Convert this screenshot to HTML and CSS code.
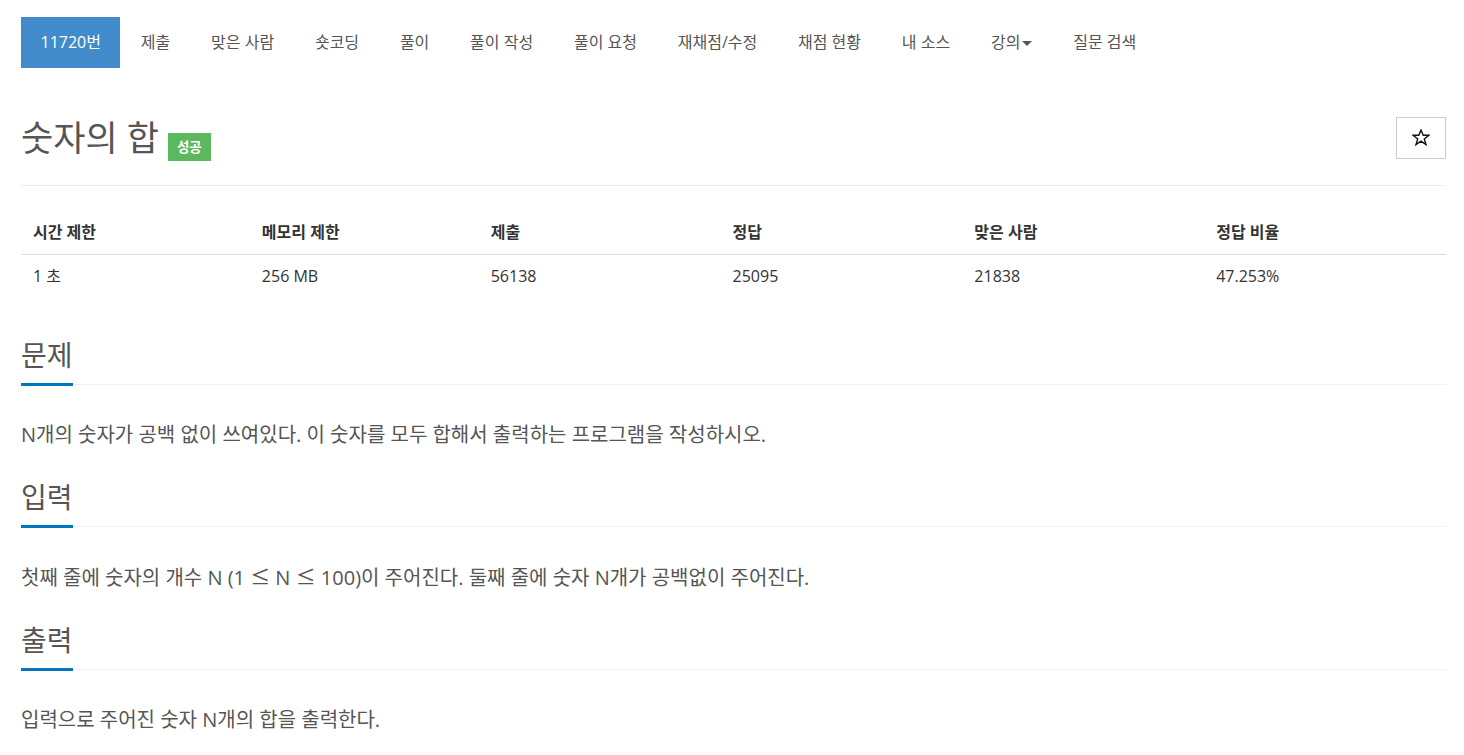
FILE: index.html
```html
<!DOCTYPE html>
<html lang="ko">
<head>
<meta charset="utf-8">
<title>11720번: 숫자의 합</title>
<link rel="stylesheet" href="styles.css">
</head>
<body>
<div class="container">
  <ul class="tabs">
    <li class="active"><a href="#">11720번</a></li>
    <li><a href="#">제출</a></li>
    <li><a href="#">맞은 사람</a></li>
    <li><a href="#">숏코딩</a></li>
    <li><a href="#">풀이</a></li>
    <li><a href="#">풀이 작성</a></li>
    <li><a href="#">풀이 요청</a></li>
    <li><a href="#">재채점/수정</a></li>
    <li><a href="#">채점 현황</a></li>
    <li><a href="#">내 소스</a></li>
    <li><a href="#">강의<span class="caret"></span></a></li>
    <li><a href="#">질문 검색</a></li>
  </ul>

  <div class="page-header">
    <h1 class="title"><span class="title-text">숫자의 합</span><span class="label-success">성공</span></h1>
    <button class="star-btn" type="button" aria-label="즐겨찾기">
      <svg width="18" height="17" viewBox="0 0 18 17"><polygon points="9,1 11.2,6.3 16.9,6.3 12.3,9.9 14,15.6 9,12.2 4,15.6 5.7,9.9 1.1,6.3 6.8,6.3" fill="none" stroke="#111" stroke-width="1.4" stroke-linejoin="miter"/></svg>
    </button>
  </div>

  <table class="info">
    <thead>
      <tr>
        <th class="c16">시간 제한</th>
        <th class="c16">메모리 제한</th>
        <th class="c17">제출</th>
        <th class="c17">정답</th>
        <th class="c17">맞은 사람</th>
        <th class="c17">정답 비율</th>
      </tr>
    </thead>
    <tbody>
      <tr>
        <td>1 초</td>
        <td>256 MB</td>
        <td>56138</td>
        <td>25095</td>
        <td>21838</td>
        <td>47.253%</td>
      </tr>
    </tbody>
  </table>

  <section class="section">
    <h2 class="headline"><span>문제</span></h2>
    <p class="text">N개의 숫자가 공백 없이 쓰여있다. 이 숫자를 모두 합해서 출력하는 프로그램을 작성하시오.</p>
  </section>
  <section class="section">
    <h2 class="headline"><span>입력</span></h2>
    <p class="text">첫째 줄에 숫자의 개수 N (1 <span class="math">≤</span> N <span class="math">≤</span> 100)이 주어진다. 둘째 줄에 숫자 N개가 공백없이 주어진다.</p>
  </section>
  <section class="section">
    <h2 class="headline"><span>출력</span></h2>
    <p class="text">입력으로 주어진 숫자 N개의 합을 출력한다.</p>
  </section>
</div>
</body>
</html>
```

FILE: styles.css
```css
html, body {
  margin: 0;
  padding: 0;
  background: #fff;
}
body {
  font-family: "Open Sans", "Noto Sans CJK KR", sans-serif;
  font-size: 16px;
  color: #333;
}
.container {
  padding: 0 18px 0 21px;
}
.tabs {
  list-style: none;
  margin: 17px 0 0 0;
  padding: 0;
  display: flex;
}
.tabs li a {
  display: block;
  padding: 15px 20.4px;
  line-height: 21px;
  font-size: 16px;
  color: #555;
  text-decoration: none;
}
.tabs li.active a {
  background: #428bca;
  color: #fff;
  padding: 15px 19.5px;
}
.caret {
  display: inline-block;
  width: 0;
  height: 0;
  margin-left: 2px;
  vertical-align: middle;
  border-top: 5px solid #555;
  border-left: 5px solid transparent;
  border-right: 5px solid transparent;
}
.page-header {
  margin-top: 49px;
  padding-bottom: 24px;
  border-bottom: 1px solid #eee;
  display: flex;
  align-items: flex-start;
  justify-content: space-between;
}
.title {
  margin: 2px 0 0 0;
  display: flex;
  align-items: flex-start;
  font-size: 35px;
  font-weight: 400;
  line-height: 38px;
  color: #555;
}
.label-success {
  margin: 14px 0 0 9px;
  background: #5cb85c;
  color: #fff;
  font-size: 13.5px;
  font-weight: 700;
  line-height: 16px;
  padding: 6px 9px;
}
.star-btn {
  width: 50px;
  height: 42px;
  background: #fff;
  border: 1px solid #ccc;
  padding: 0;
  display: flex;
  align-items: center;
  justify-content: center;
}
.star-btn svg {
  display: block;
  margin-top: -2px;
}
.info {
  width: 100%;
  border-collapse: collapse;
  margin-top: 24px;
  table-layout: fixed;
}
.info th, .info td {
  text-align: left;
  padding: 12px;
  line-height: 20px;
  font-size: 16px;
  color: #333;
}
.info th {
  font-weight: 700;
  border-bottom: 1px solid #ddd;
}
.info td {
  padding-top: 11px;
}
.c16 { width: 16%; }
.c17 { width: 17%; }
.info + .section {
  margin-top: 42px;
}
.headline {
  margin: 0;
  display: flex;
  border-bottom: 1px dotted #e5e5e5;
  font-size: 28px;
  font-weight: 400;
  line-height: 30px;
  color: #555;
}
.headline span {
  display: inline-block;
  padding-bottom: 13px;
  border-bottom: 3px solid #0076c0;
  margin-bottom: -2px;
}
.text {
  margin: 35px 0 32px 0;
  font-size: 20px;
  line-height: 30px;
  color: #555;
}
.math {
  font-family: "Noto Sans CJK KR", sans-serif;
}
```
